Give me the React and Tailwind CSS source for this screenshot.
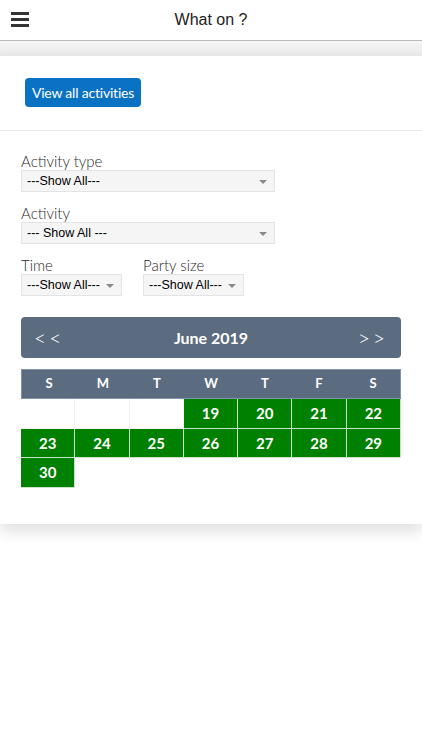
import { useState } from 'react'

const days = ['S', 'M', 'T', 'W', 'T', 'F', 'S']

// June 2019: dates before today are left blank
const cells = [null, null, null, 19, 20, 21, 22, 23, 24, 25, 26, 27, 28, 29, 30]

function FakeSelect({ value, className = '' }) {
  return (
    <div
      className={`relative h-[22px] bg-[#f5f5f5] border border-[#e4e4e4] flex items-center pl-[5px] text-[12.5px] text-black font-['Liberation_Sans',Arial,sans-serif] ${className}`}
    >
      {value}
      <span className="absolute right-[7px] top-[9px] w-0 h-0 border-l-[4px] border-r-[4px] border-t-[4px] border-l-transparent border-r-transparent border-t-[#8a8a8a]" />
    </div>
  )
}

function Field({ label, children }) {
  return (
    <div>
      <div className="h-[18px] leading-[18px] text-[15px] font-light text-[#2a2a2a]">{label}</div>
      {children}
    </div>
  )
}

export default function App() {
  const [month] = useState('June 2019')

  return (
    <div className="min-h-[750px] bg-white font-['Lato',sans-serif]">
      {/* Top bar */}
      <header className="relative h-[41px] border-b border-[#bcbcbc] flex items-center justify-center">
        <button className="absolute left-[11px] top-[12px] flex flex-col gap-[3px]">
          <span className="block w-[18px] h-[3px] bg-[#333]" />
          <span className="block w-[18px] h-[3px] bg-[#333]" />
          <span className="block w-[18px] h-[3px] bg-[#333]" />
        </button>
        <h1 className="text-[16px] text-[#222] font-['Liberation_Sans',Arial,sans-serif]">What on ?</h1>
      </header>

      <div className="h-[15px] bg-gradient-to-b from-[#f6f6f6] to-[#e9e9e9]" />

      {/* Card */}
      <div className="bg-white shadow-[0_8px_14px_rgba(0,0,0,0.12)]">
        <div className="pl-[25px] pt-[22px] pb-[23px]">
          <button className="h-[29px] w-[116px] rounded-[4px] bg-[#0a72c2] text-white text-[14px] font-normal tracking-[-0.2px]">
            View all activities
          </button>
        </div>
        <div className="border-t border-[#e6e6e6]" />

        <div className="px-[21px] pt-[21px] pb-[36px]">
          <div className="flex flex-col gap-[12px]">
            <Field label="Activity type">
              <FakeSelect value="---Show All---" className="w-[254px]" />
            </Field>
            <Field label="Activity">
              <FakeSelect value="--- Show All ---" className="w-[254px]" />
            </Field>
            <div className="flex gap-[21px]">
              <Field label="Time">
                <FakeSelect value="---Show All---" className="w-[101px]" />
              </Field>
              <Field label="Party size">
                <FakeSelect value="---Show All---" className="w-[101px]" />
              </Field>
            </div>
          </div>

          {/* Calendar */}
          <div className="mt-[21px] h-[41px] rounded-[4px] bg-[#5b6b80] flex items-center justify-between px-[13px] text-white">
            <span className="text-[21px] font-light tracking-[3px] leading-none">&lt;&lt;</span>
            <span className="text-[16px] font-bold">{month}</span>
            <span className="text-[21px] font-light tracking-[3px] leading-none">&gt;&gt;</span>
          </div>

          <div className="mt-[11px]">
            <div className="grid grid-cols-7 h-[30px] bg-[#5b6b80] border border-[#8393a6]">
              {days.map((d, i) => (
                <div key={i} className="flex items-center justify-center text-white text-[13px] font-bold">
                  {d}
                </div>
              ))}
            </div>
            <div className="grid grid-cols-7">
              {cells.map((n, i) =>
                n ? (
                  <div
                    key={i}
                    className="h-[29.5px] bg-[#008000] border-r border-b border-[#c9e3c9] flex items-center justify-center text-white text-[15px] font-bold"
                  >
                    {n}
                  </div>
                ) : (
                  <div key={i} className="h-[29.5px] bg-white border-r border-b border-[#f1f1f1]" />
                )
              )}
            </div>
          </div>
        </div>
      </div>
    </div>
  )
}
